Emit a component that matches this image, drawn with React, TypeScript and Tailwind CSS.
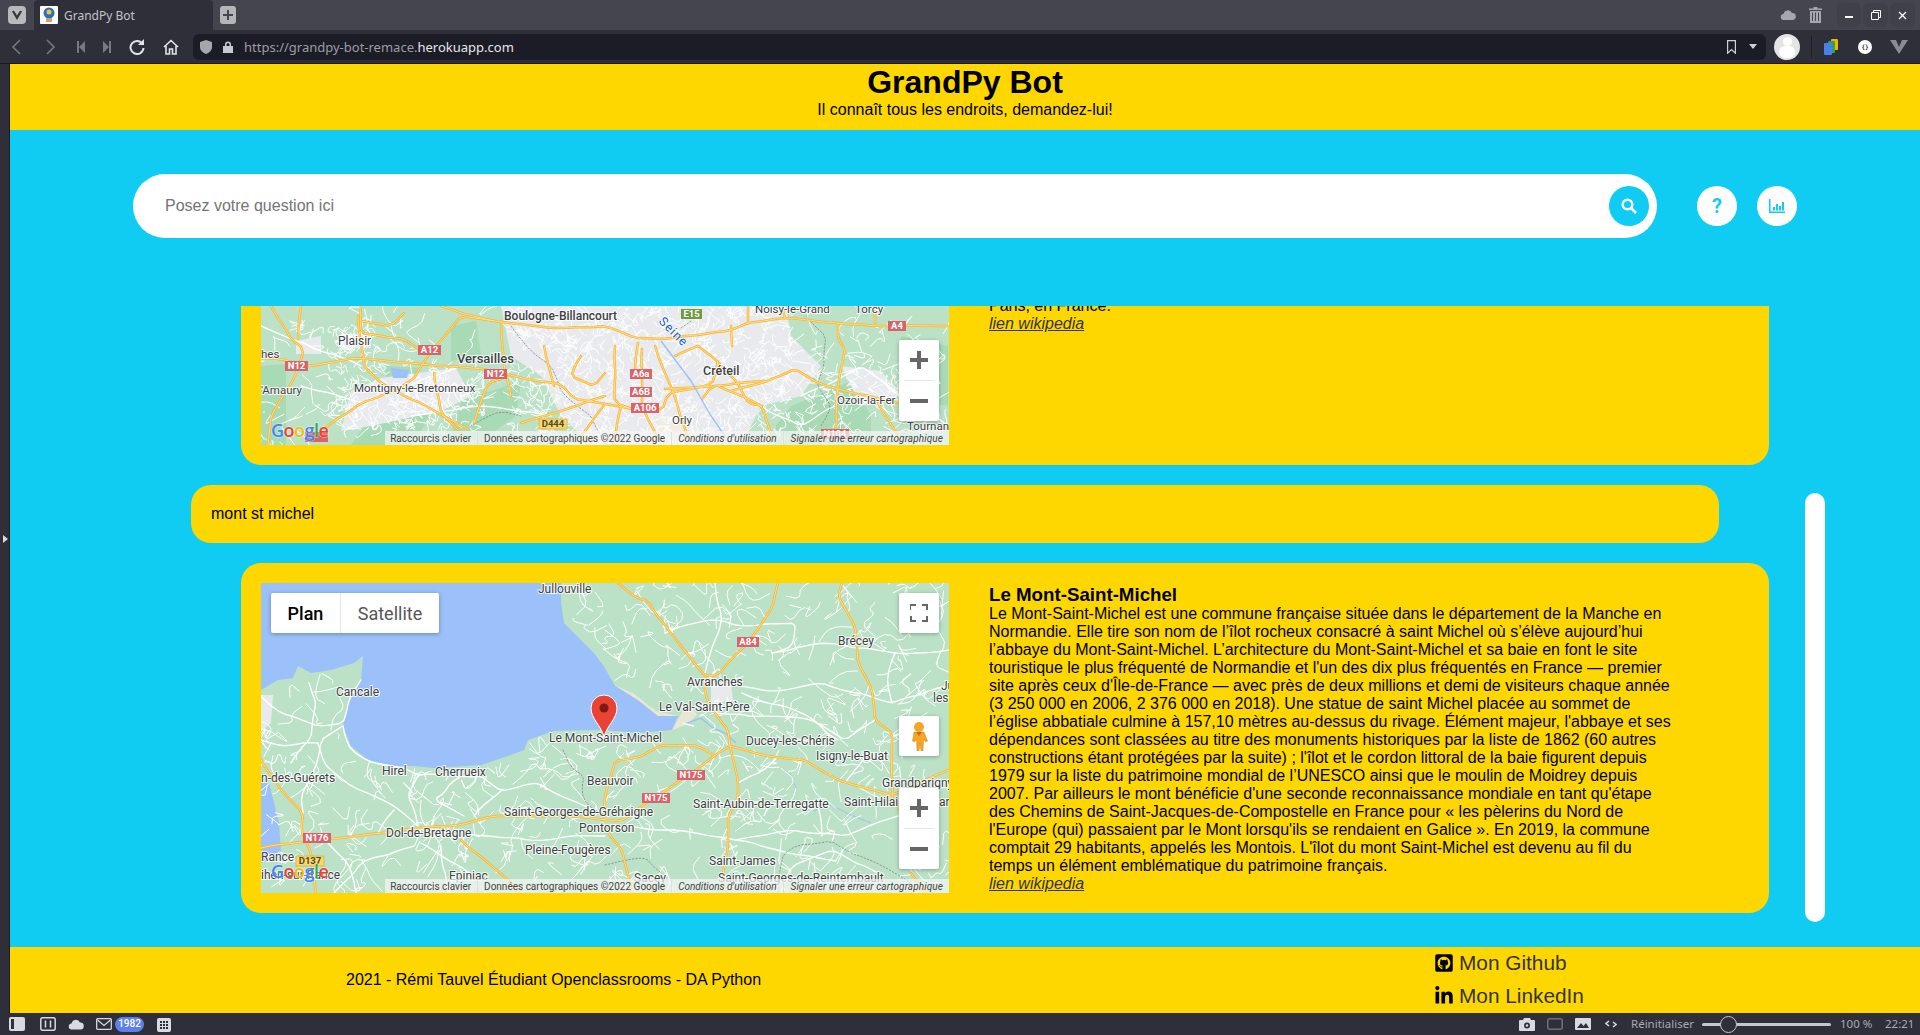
import React from "react";
import { FaGithubSquare, FaLinkedinIn } from "react-icons/fa";

type Pt = number[][];
const pts = (p: Pt) => p.map((q) => q.map((v) => Math.round(v * 10) / 10).join(",")).join(" ");

function rng(seed: number) {
  let s = seed;
  return () => {
    s = (s * 16807) % 2147483647;
    return s / 2147483647;
  };
}

function chaikin(p: Pt): Pt {
  if (p.length < 3) return p;
  const out: Pt = [p[0]];
  for (let i = 0; i < p.length - 1; i++) {
    const [a, b] = p[i];
    const [c, d] = p[i + 1];
    out.push([a * 0.75 + c * 0.25, b * 0.75 + d * 0.25]);
    out.push([a * 0.25 + c * 0.75, b * 0.25 + d * 0.75]);
  }
  out.push(p[p.length - 1]);
  return out;
}

function wiggle(p: Pt, amp: number, seed: number): Pt {
  const r = rng(seed + 7);
  const out: Pt = [p[0]];
  for (let i = 0; i < p.length - 1; i++) {
    const [a, b] = p[i];
    const [c, d] = p[i + 1];
    const dist = Math.hypot(c - a, d - b);
    const n = Math.max(1, Math.round(dist / 14));
    for (let k = 1; k <= n; k++) {
      const t = k / n;
      const j = k === n ? 0 : amp;
      out.push([a + (c - a) * t + (r() - 0.5) * j * 2, b + (d - b) * t + (r() - 0.5) * j * 2]);
    }
  }
  return chaikin(out);
}

function inPoly(x: number, y: number, poly: Pt) {
  let inside = false;
  for (let i = 0, j = poly.length - 1; i < poly.length; j = i++) {
    const [xi, yi] = poly[i];
    const [xj, yj] = poly[j];
    if (yi > y !== yj > y && x < ((xj - xi) * (y - yi)) / (yj - yi) + xi) inside = !inside;
  }
  return inside;
}

function streets(seed: number, n: number, x0: number, y0: number, x1: number, y1: number, len: number): Pt[] {
  const r = rng(seed);
  const out: Pt[] = [];
  for (let i = 0; i < n; i++) {
    let x = x0 + r() * (x1 - x0);
    let y = y0 + r() * (y1 - y0);
    const line: Pt = [[x, y]];
    const segs = 2 + Math.floor(r() * 3);
    for (let j = 0; j < segs; j++) {
      x += (r() - 0.5) * len;
      y += (r() - 0.5) * len;
      line.push([x, y]);
    }
    out.push(line);
  }
  return out;
}

function Roads({ yellow, white, thin, dashed }: { yellow: Pt[]; white: Pt[]; thin: Pt[]; dashed?: Pt[] }) {
  return (
    <g fill="none" strokeLinejoin="round" strokeLinecap="round">
      {thin.map((p, i) => (
        <polyline key={i} points={pts(chaikin(p))} stroke="#ffffff" strokeWidth={1} />
      ))}
      {white.map((p, i) => (
        <polyline key={i} points={pts(wiggle(p, 1.6, i + 3))} stroke="#ffffff" strokeWidth={1.4} />
      ))}
      {(dashed || []).map((p, i) => (
        <polyline key={i} points={pts(wiggle(p, 1.5, i + 40))} stroke="#80868b" strokeWidth={0.8} strokeDasharray="1.5 2" />
      ))}
      {yellow.map((p, i) => (
        <polyline key={i} points={pts(wiggle(p, 0.7, i + 90))} stroke="#f9b534" strokeWidth={2.5} />
      ))}
      {yellow.map((p, i) => (
        <polyline key={i} points={pts(wiggle(p, 0.7, i + 90))} stroke="#fde293" strokeWidth={0.9} />
      ))}
    </g>
  );
}

function Label({ x, y, t, s = 12, w = 400, c = "#3c4043" }: { x: number; y: number; t: string; s?: number; w?: number; c?: string }) {
  return (
    <text
      x={x}
      y={y + s * 0.36}
      fontFamily="Roboto, sans-serif"
      fontSize={s}
      fontWeight={w}
      fill={c}
      stroke="#ffffff"
      strokeOpacity={0.85}
      strokeWidth={2}
      paintOrder="stroke"
    >
      {t}
    </text>
  );
}

function Shield({ x, y, w, t, kind = "r" }: { x: number; y: number; w: number; t: string; kind?: "r" | "y" | "g" }) {
  const bg = kind === "r" ? "#d9636a" : kind === "y" ? "#fdd663" : "#6f9a3f";
  const fg = kind === "y" ? "#4a4a3a" : "#ffffff";
  return (
    <g>
      <rect x={x} y={y} width={w} height={10} fill={bg} stroke={kind === "y" ? "#d8a92c" : "none"} strokeWidth={0.7} />
      <text x={x + w / 2} y={y + 8.4} textAnchor="middle" fontFamily="Roboto, sans-serif" fontSize={9.5} fontWeight={700} fill={fg}>
        {t}
      </text>
    </g>
  );
}

function GoogleLogo({ x, y }: { x: number; y: number }) {
  return (
    <text x={x} y={y} fontFamily="'Open Sans', sans-serif" fontSize={18} fontWeight={600} stroke="#ffffff" strokeOpacity={0.45} strokeWidth={1.5} paintOrder="stroke" letterSpacing={-0.5}>
      <tspan fill="#4285f4">G</tspan>
      <tspan fill="#ea4335">o</tspan>
      <tspan fill="#fbbc05">o</tspan>
      <tspan fill="#4285f4">g</tspan>
      <tspan fill="#34a853">l</tspan>
      <tspan fill="#ea4335">e</tspan>
    </text>
  );
}

function ZoomControls() {
  return (
    <div className="absolute right-[10px] top-[205px] w-[40px] h-[81px] bg-white rounded-[2px] shadow-[0_1px_4px_rgba(0,0,0,0.3)] flex flex-col items-center">
      <div className="h-[40px] flex items-center justify-center">
        <svg width="18" height="18" viewBox="0 0 18 18"><path d="M0 7h7V0h4v7h7v4h-7v7H7v-7H0z" fill="#666666" /></svg>
      </div>
      <div className="w-[30px] h-px bg-[#e6e6e6]" />
      <div className="h-[40px] flex items-center justify-center">
        <svg width="18" height="18" viewBox="0 0 18 18"><path d="M0 7h18v4H0z" fill="#666666" /></svg>
      </div>
    </div>
  );
}

function Attribution() {
  return (
    <div className="absolute right-0 bottom-0 h-[14px] pt-px flex items-center bg-[rgba(245,245,245,0.72)] text-[10px] leading-[13px] text-[#444444] font-['Roboto',sans-serif] whitespace-nowrap">
      <span className="pl-[5px] pr-[6px] border-r border-[#e0e0e0]">Raccourcis clavier</span>
      <span className="pl-[6px] pr-[6px] border-r border-[#e0e0e0]">Données cartographiques ©2022 Google</span>
      <span className="pl-[6px] pr-[6px] border-r border-[#e0e0e0] italic">Conditions d'utilisation</span>
      <span className="pl-[7px] pr-[6px] italic tracking-[0.1px]">Signaler une erreur cartographique</span>
    </div>
  );
}

const map1Yellow: Pt[] = [
  [[0,52],[20,53],[47,60],[93,52],[150,57],[180,60],[223,63],[277,75],[300,78],[313,93],[344,98],[371,103],[401,105],[407,87],[451,78],[457,55]],
  [[153,72],[167,50],[200,10],[233,15]],
  [[180,0],[200,7],[233,15],[290,22],[344,20],[374,32],[401,33],[424,30],[467,25],[487,17],[524,12],[577,17],[627,20],[688,20]],
  [[63,123],[100,97],[137,83],[153,72]],
  [[283,40],[293,80]],
  [[213,117],[227,77],[240,73]],
  [[100,0],[100,27],[143,33],[157,43]],
  [[260,117],[293,107],[344,90]],
  [[377,37],[374,63]],
  [[394,40],[411,83],[427,133]],
  [[354,40],[354,97],[371,103]],
  [[381,43],[381,100],[397,133]],
  [[470,85],[501,77],[534,63],[557,77],[577,83],[637,97]],
  [[577,17],[577,33],[584,43],[577,80],[574,130]],
  [[457,80],[481,90],[501,100],[511,130]],
  [[617,97],[637,130]],
  [[521,0],[524,12]],
  [[487,0],[487,17]],
  [[614,0],[614,17]],
  [[10,0],[30,33],[43,43],[33,73],[10,110],[7,139]],
  [[40,0],[37,33]],
  [[97,10],[103,60],[120,77],[140,88],[160,97],[177,107],[207,123]],
  [[143,7],[130,20],[100,15]],
  [[173,67],[180,107],[200,127]],
  [[240,15],[243,60],[250,90]],
  [[320,50],[310,70],[333,80],[344,67]],
  [[437,40],[454,53],[477,77],[487,97],[501,100]],
  [[441,93],[451,80],[504,75]],
  [[437,40],[414,50]],
  [[404,83],[451,80]],
  [[344,98],[320,130]],
  [[360,100],[352,139]],
  [[470,20],[471,40]],
];
const map1White: Pt[] = [
  [[0,20],[30,33],[100,60]],
  [[40,80],[100,97],[200,60]],
  [[150,110],[220,100],[290,110]],
  [[540,90],[600,60],[640,90],[687,120]],
  [[500,100],[540,120],[574,100]],
];
const map1Thin: Pt[] = [
  ...streets(11, 620, 250, 0, 530, 139, 16),
  ...streets(23, 130, 80, 60, 215, 125, 16),
  ...streets(37, 40, 70, 20, 120, 50, 14),
  ...streets(53, 70, 0, 0, 240, 139, 30),
  ...streets(71, 100, 530, 20, 687, 139, 26),
  ...streets(83, 30, 575, 60, 640, 100, 14),
];
const map1Dash: Pt[] = [
  [[250,20],[270,45],[290,60],[300,85],[330,110],[340,130]],
  [[210,120],[240,105],[260,110]],
  [[545,10],[565,30],[563,60],[556,80],[570,100],[560,120]],
  [[430,15],[420,22]],
];

function Map1() {
  return (
    <div className="relative w-[688px] h-[310px] shrink-0 overflow-hidden">
      <svg width="688" height="310" viewBox="0 -171 688 310" className="block">
        <rect x="0" y="-171" width="688" height="310" fill="#bbe2c6" />
        {[
          [[190,20],[215,15],[220,50],[190,55]],
          [[125,60],[160,62],[150,75],[125,75]],
          [[200,95],[260,75],[255,110],[220,135],[190,130]],
          [[0,60],[25,58],[25,139],[0,139]],
          [[530,100],[590,75],[610,110],[610,139],[500,139]],
          [[640,30],[687,40],[687,100],[640,90]],
          [[432,5],[470,5],[470,20],[440,25]],
          [[120,95],[170,110],[150,139],[90,139]],
        ].map((p, i) => (
          <polygon key={i} points={pts(p)} fill="#a8dab5" />
        ))}
        {[
          [[240,0],[344,0],[525,0],[530,30],[560,60],[540,90],[500,100],[480,139],[330,139],[300,110],[280,70],[250,50]],
          [[90,85],[120,72],[195,62],[210,90],[180,105],[110,120],[80,125]],
          [[80,28],[110,28],[110,42],[80,42]],
          [[580,60],[620,65],[640,90],[600,100]],
          [[35,35],[60,30],[60,48],[35,48]],
        ].map((p, i) => (
          <polygon key={i} points={pts(p)} fill="#e8eaed" />
        ))}
        <polygon points="130,62 148,64 146,72 132,72" fill="#9cc0f9" />
        <polygon points="398,113 425,113 427,139 398,139" fill="#f1ede0" />
        <Roads yellow={map1Yellow} white={map1White} thin={map1Thin} dashed={map1Dash} />
        <polyline points="400,35 430,75 450,110 470,139" fill="none" stroke="#9cc0f9" strokeWidth={1.4} />
        <Label x={243} y={10} t="Boulogne-Billancourt" w={500} s={12} />
        <Label x={77} y={35} t="Plaisir" />
        <Label x={196} y={52} t="Versailles" s={13} w={500} />
        <Label x={0} y={48} t="hes" s={11.5} />
        <Label x={0} y={84} t="'Amaury" s={11.5} />
        <Label x={93} y={82} t="Montigny-le-Bretonneux" s={11.5} />
        <Label x={442} y={64} t="Créteil" s={12.5} w={500} />
        <Label x={411} y={114} t="Orly" s={11.5} />
        <Label x={576} y={94} t="Ozoir-la-Fer" s={11.5} />
        <Label x={646} y={120} t="Tournan" s={11.5} />
        <Label x={494} y={3} t="Noisy-le-Grand" s={11.5} />
        <Label x={594} y={3} t="Torcy" s={11.5} />
        <text x={397} y={16} transform="rotate(45 397 16)" fontFamily="Roboto, sans-serif" fontSize={12.5} fill="#1a5fc8" stroke="#ffffff" strokeOpacity={0.8} strokeWidth={1.5} paintOrder="stroke" letterSpacing={1}>Seine</text>
        <Shield x={24} y={55} w={23} t="N12" />
        <Shield x={157} y={39} w={23} t="A12" />
        <Shield x={223} y={63} w={23} t="N12" />
        <Shield x={278} y={113} w={28} t="D444" kind="y" />
        <Shield x={420} y={3} w={21} t="E15" kind="g" />
        <Shield x={627} y={15} w={18} t="A4" />
        <Shield x={369} y={63} w={22} t="A6a" />
        <Shield x={369} y={81} w={22} t="A6B" />
        <Shield x={370} y={97} w={28} t="A106" />
        <Shield x={560} y={123} w={28} t="N104" />
        <rect x={44} y={126} width={23} height={10} fill="#d9636a" />
        <GoogleLogo x={10} y={131} />
      </svg>
      <ZoomControls />
      <Attribution />
    </div>
  );
}

const map2Water: Pt = [[300,0],[300,20],[303,40],[320,57],[333,70],[344,85],[354,103],[377,117],[397,133],[417,133],[411,147],[377,150],[344,147],[333,147],[293,148],[267,157],[263,167],[247,173],[220,182],[173,185],[153,183],[133,183],[107,177],[90,163],[82,143],[87,120],[100,97],[102,73],[93,80],[70,87],[50,90],[37,83],[32,95],[17,97],[0,107],[0,0]];

const map2Yellow: Pt[] = [
  [[517,0],[512,23],[501,40],[484,63],[467,80],[457,92],[444,93],[394,30],[387,18],[376,15],[357,0]],
  [[444,93],[444,113],[454,130],[467,147],[469,163],[477,197],[477,217],[467,233],[467,263],[462,290],[462,310]],
  [[469,163],[444,180],[411,203],[381,223],[361,238],[344,237],[307,233],[273,233],[233,233],[200,242],[157,245],[123,250],[67,256],[13,262],[0,265]],
  [[469,163],[501,172],[544,177],[577,197],[631,212],[688,187]],
  [[581,0],[577,13],[594,43],[597,80],[611,107],[614,137],[631,150],[631,213]],
  [[344,237],[344,213],[354,178],[381,173],[401,162],[437,163],[454,173]],
  [[0,177],[20,207],[42,230],[40,247],[50,270],[55,310]],
  [[344,245],[361,267],[371,310]],
  [[200,257],[227,280],[250,300],[258,310]],
  [[631,213],[640,230]],
  [[650,290],[665,310]],
];
const map2White: Pt[] = [
  [[82,143],[90,167],[107,178],[133,183],[157,192]],
  [[0,113],[20,130],[57,143],[82,140],[88,117],[100,97]],
  [[57,160],[63,180],[90,203],[133,223],[157,243]],
  [[82,143],[60,157],[57,177],[40,213],[42,230]],
  [[0,157],[20,163],[57,160]],
  [[157,193],[147,213],[157,243]],
  [[157,192],[220,193],[240,208],[277,200],[310,217],[333,227]],
  [[200,193],[173,217],[203,233]],
  [[133,227],[117,250]],
  [[153,263],[100,280],[73,310]],
  [[240,208],[213,233]],
  [[203,250],[267,257],[333,253],[344,253]],
  [[180,263],[187,310]],
  [[160,260],[213,293]],
  [[67,260],[87,280],[95,310]],
  [[30,180],[50,155],[55,120],[48,100]],
  [[478,103],[517,108],[561,100],[631,120],[688,103]],
  [[454,130],[504,133],[551,137],[584,157],[614,137]],
  [[481,110],[547,133],[577,157]],
  [[511,70],[561,60],[594,65],[634,70],[688,67]],
  [[454,0],[461,33],[444,90]],
  [[404,50],[447,37],[491,43],[534,40],[531,63],[511,70]],
  [[634,70],[626,100],[631,120]],
  [[670,147],[631,153]],
  [[474,257],[531,247],[584,253],[637,233]],
  [[344,243],[411,247],[474,257],[517,267],[575,278]],
  [[477,217],[557,223],[561,253]],
  [[477,200],[511,180],[517,173]],
  [[584,200],[607,170]],
  [[617,290],[571,267],[531,283],[520,310]],
];
const map2Thin: Pt[] = streets(19, 620, 0, 0, 688, 310, 30).filter(
  (l) => !l.some(([x, y]) => inPoly(x, y, map2Water)),
);
const map2Dash: Pt[] = [
  [[302,167],[310,185],[323,193],[322,215],[330,225],[344,232]],
  [[344,282],[385,275],[400,290]],
  [[517,310],[523,270],[537,262],[570,258],[590,270],[625,285],[650,300]],
];

function Map2() {
  return (
    <div className="relative w-[688px] h-[310px] shrink-0 overflow-hidden">
      <svg width="688" height="310" viewBox="0 0 688 310" className="block">
        <rect width="688" height="310" fill="#bbe2c6" />
        <polygon points="0,200 8,200 18,240 20,270 0,280" fill="#9cc0f9" />
        <polygon points={pts(map2Water)} fill="#9cc0f9" />
        <polygon points="355,103 377,117 397,133 417,133 422,128 411,147 425,142 436,132 430,122 417,133 395,128 372,110" fill="#e9e6d3" />
        <polygon points="0,112 12,112 10,140 0,148" fill="#e8eaed" />
        <polygon points="450,100 470,100 472,118 450,120" fill="#e8eaed" />
        <polyline points="424,141 440,135 452,145 464,150 475,160" fill="none" stroke="#9cc0f9" strokeWidth={1.4} />
        <polyline points="552,228 570,222 590,232 610,240" fill="none" stroke="#9cc0f9" strokeWidth={1} />
        <polyline points="529,190 535,205" fill="none" stroke="#9cc0f9" strokeWidth={1} />
        <Roads yellow={map2Yellow} white={map2White} thin={map2Thin} dashed={map2Dash} />
        <Label x={277} y={6} t="Jullouville" />
        <Label x={75} y={109} t="Cancale" />
        <Label x={121} y={188} t="Hirel" />
        <Label x={174} y={189} t="Cherrueix" />
        <Label x={0} y={195} t="n-des-Guérets" />
        <Label x={288} y={155} t="Le Mont-Saint-Michel" />
        <Label x={243} y={229} t="Saint-Georges-de-Gréhaigne" />
        <Label x={125} y={250} t="Dol-de-Bretagne" />
        <Label x={318} y={245} t="Pontorson" />
        <Label x={264} y={267} t="Pleine-Fougères" />
        <Label x={326} y={198} t="Beauvoir" />
        <Label x={0} y={274} t="Rance" />
        <Label x={0} y={292} t="ihen-sur-Rance" />
        <Label x={188} y={293} t="Epiniac" />
        <Label x={426} y={99} t="Avranches" />
        <Label x={398} y={124} t="Le Val-Saint-Père" />
        <Label x={577} y={58} t="Brécey" />
        <Label x={485} y={158} t="Ducey-les-Chéris" />
        <Label x={555} y={173} t="Isigny-le-Buat" />
        <Label x={621} y={200} t="Grandparigny" />
        <Label x={432} y={221} t="Saint-Aubin-de-Terregatte" />
        <Label x={583} y={219} t="Saint-Hilai" />
        <Label x={678} y={219} t="ar" />
        <Label x={448} y={278} t="Saint-James" />
        <Label x={373} y={295} t="Sacey" />
        <Label x={457} y={295} t="Saint-Georges-de-Reintembault" />
        <Label x={680} y={103} t="Ju" />
        <Label x={672} y={115} t="les" />
        <Shield x={476} y={54} w={22} t="A84" />
        <Shield x={416} y={187} w={28} t="N175" />
        <Shield x={381} y={210} w={28} t="N175" />
        <Shield x={42} y={250} w={28} t="N176" />
        <Shield x={35} y={273} w={28} t="D137" kind="y" />
        <GoogleLogo x={10} y={295} />
        <path d="M343 154 C340 142 330 136 330 125 A13 13 0 0 1 356 125 C356 136 346 142 343 154 Z" fill="#ea4335" stroke="#ffffff" strokeWidth={1} />
        <circle cx="343" cy="125" r="4.500" fill="#7d1a12" />
      </svg>
      <div className="absolute left-[10px] top-[10px] w-[168px] h-[40px] flex bg-white rounded-[2px] shadow-[0_1px_4px_rgba(0,0,0,0.3)] font-['Roboto',sans-serif] text-[18px]">
        <div className="w-[70px] flex items-center justify-center font-medium text-black border-r border-[#e6e6e6]">Plan</div>
        <div className="flex-1 flex items-center justify-center text-[#565656]">Satellite</div>
      </div>
      <div className="absolute right-[10px] top-[10px] w-[40px] h-[40px] bg-white rounded-[2px] shadow-[0_1px_4px_rgba(0,0,0,0.3)] flex items-center justify-center">
        <svg width="18" height="18" viewBox="0 0 18 18" fill="none" stroke="#666666" strokeWidth="2"><path d="M0 6V1h6M12 1h5v5M17 12v5h-5M6 17H1v-5" /></svg>
      </div>
      <div className="absolute right-[10px] top-[133px] w-[40px] h-[40px] bg-white rounded-[2px] shadow-[0_1px_4px_rgba(0,0,0,0.3)] flex items-center justify-center">
        <svg width="18" height="30" viewBox="0 0 18 30">
          <circle cx="9" cy="6" r="5" fill="#f5a623" />
          <path d="M4 11h10l3.500 9-2 1-2-3-.5 12h-2l-1-8-1 8H7L6.500 18l-2 3-2-1z" fill="#f5a623" stroke="#c98a1a" strokeWidth="0.5" />
          <path d="M6 11h6l-3 4z" fill="#d9622b" />
        </svg>
      </div>
      <ZoomControls />
      <Attribution />
    </div>
  );
}

const body = [
  "Le Mont-Saint-Michel est une commune française située dans le département de la Manche en",
  "Normandie. Elle tire son nom de l’îlot rocheux consacré à saint Michel où s’élève aujourd’hui",
  "l’abbaye du Mont-Saint-Michel. L’architecture du Mont-Saint-Michel et sa baie en font le site",
  "touristique le plus fréquenté de Normandie et l'un des dix plus fréquentés en France — premier",
  "site après ceux d'Île-de-France — avec près de deux millions et demi de visiteurs chaque année",
  "(3 250 000 en 2006, 2 376 000 en 2018). Une statue de saint Michel placée au sommet de",
  "l’église abbatiale culmine à 157,10 mètres au-dessus du rivage. Élément majeur, l'abbaye et ses",
  "dépendances sont classées au titre des monuments historiques par la liste de 1862 (60 autres",
  "constructions étant protégées par la suite) ; l'îlot et le cordon littoral de la baie figurent depuis",
  "1979 sur la liste du patrimoine mondial de l’UNESCO ainsi que le moulin de Moidrey depuis",
  "2007. Par ailleurs le mont bénéficie d'une seconde reconnaissance mondiale en tant qu'étape",
  "des Chemins de Saint-Jacques-de-Compostelle en France pour « les pèlerins du Nord de",
  "l'Europe (qui) passaient par le Mont lorsqu'ils se rendaient en Galice ». En 2019, la commune",
  "comptait 29 habitants, appelés les Montois. L'îlot du mont Saint-Michel est devenu au fil du",
  "temps un élément emblématique du patrimoine français.",
];

function TopBar() {
  return (
    <div className="h-[30px] bg-[#44454f] flex items-center">
      <div className="ml-[8px] w-[18px] h-[18px] rounded-[4px] bg-[#b9b9bd] flex items-center justify-center">
        <svg width="12" height="11" viewBox="0 0 12 11"><path d="M1 1.500 6 10l5-8.500c-.5-1-2-1-2.500 0L6 5.500 3.500 1.500C3 .5 1.500.5 1 1.500z" fill="#35363f" /></svg>
      </div>
      <div className="ml-[8px] w-[179px] h-[30px] bg-[#2f2f39] rounded-t-[4px] flex items-center pl-[6px]">
        <div className="w-[18px] h-[18px] bg-white rounded-[1px] flex items-center justify-center">
          <svg width="14" height="16" viewBox="0 0 14 16">
            <circle cx="7" cy="6" r="5.500" fill="#2b6fc4" />
            <circle cx="7" cy="5" r="2.500" fill="#f2c230" />
            <rect x="4" y="11" width="6" height="4" fill="#c9a271" />
          </svg>
        </div>
        <span className="ml-[6px] mt-px text-[12px] text-[#c2c3c9] font-['Noto_Sans',sans-serif] leading-none">GrandPy Bot</span>
      </div>
      <div className="ml-[7px] w-[16px] h-[18px] rounded-[3px] bg-[#b5b5b9] flex items-center justify-center">
        <svg width="10" height="10" viewBox="0 0 10 10"><path d="M4 0h2v4h4v2H6v4H4V6H0V4h4z" fill="#44454f" /></svg>
      </div>
      <div className="ml-auto flex items-center">
        <svg width="16" height="10" viewBox="0 0 16 10"><path d="M4 10a3 3 0 0 1-.5-6A4.500 4.500 0 0 1 12 3a3.500 3.500 0 0 1 .5 7z" fill="#a6a7ad" /></svg>
        <svg className="ml-[13px]" width="13" height="16" viewBox="0 0 13 16" fill="#a6a7ad"><path d="M4.500 0h4v1.500H13V3H0V1.500h4.500zM1 4h11v12H1zm2 1.500V14h1V5.500zm3 0V14h1V5.500zm3 0V14h1V5.500z" /></svg>
        <div className="ml-[15px] w-[24px] h-[24px] rounded-[6px] bg-[#3f4049] flex items-center justify-center">
          <div className="w-[8px] h-[2px] mt-[4px] bg-white" />
        </div>
        <div className="ml-[2px] w-[25px] h-[24px] rounded-[6px] bg-[#3f4049] flex items-center justify-center">
          <svg width="10" height="10" viewBox="0 0 10 10" fill="none" stroke="#ffffff"><path d="M2.500 2.500V.5h7v7h-2M.5 2.500h7v7h-7z" /></svg>
        </div>
        <div className="ml-[2px] mr-[5px] w-[25px] h-[24px] rounded-[6px] bg-[#3f4049] flex items-center justify-center">
          <svg width="9" height="9" viewBox="0 0 9 9" stroke="#ffffff" strokeWidth="1.300"><path d="M1 1l7 7M8 1L1 8" /></svg>
        </div>
      </div>
    </div>
  );
}

function AddressBar() {
  return (
    <div className="h-[34px] bg-[#2f2f39] border-b border-[#17171c] flex items-center">
      <svg className="ml-[11px]" width="10" height="16" viewBox="0 0 10 16" fill="none" stroke="#777880" strokeWidth="1.600"><path d="M9 1 2 8l7 7" /></svg>
      <svg className="ml-[25px]" width="10" height="16" viewBox="0 0 10 16" fill="none" stroke="#777880" strokeWidth="1.600"><path d="M1 1l7 7-7 7" /></svg>
      <svg className="ml-[21px]" width="8" height="12" viewBox="0 0 8 12" fill="#777880"><path d="M0 0h2v12H0zM8 0v12L2 6z" /></svg>
      <svg className="ml-[18px]" width="8" height="12" viewBox="0 0 8 12" fill="#777880"><path d="M6 0h2v12H6zM0 0v12l6-6z" /></svg>
      <svg className="ml-[18px]" width="16" height="16" viewBox="0 0 16 16" fill="none" stroke="#e3e3e6" strokeWidth="2"><path d="M13.500 5A6.500 6.500 0 1 0 14.500 9" /><path d="M15 0v6H9z" fill="#e3e3e6" stroke="none" /></svg>
      <svg className="ml-[18px]" width="16" height="16" viewBox="0 0 16 16" fill="none" stroke="#e3e3e6" strokeWidth="1.600"><path d="M1 8 8 1.500 15 8M3 7v8h3.500v-5h3v5H13V7" /></svg>
      <div className="ml-[14px] flex-1 h-[26px] mr-[154px] bg-[#1c1c26] rounded-[6px] flex items-center">
        <svg className="ml-[7px]" width="12" height="14" viewBox="0 0 12 14"><path d="M6 0l6 2v5c0 3.500-3 6-6 7-3-1-6-3.500-6-7V2z" fill="#a6a7ad" /></svg>
        <svg className="ml-[11px]" width="10" height="12" viewBox="0 0 10 12"><path d="M2 5V3.500a3 3 0 0 1 6 0V5h2v7H0V5zm1.500 0h3V3.500a1.500 1.500 0 0 0-3 0z" fill="#c9cacf" /></svg>
        <span className="ml-[11px] mt-px text-[13px] leading-none font-['Noto_Sans',sans-serif] text-[#9c9da5]">
          https://grandpy-bot-remace.<span className="text-[#e6e6e9]">herokuapp.com</span>
        </span>
        <svg className="ml-auto" width="9" height="14" viewBox="0 0 9 14" fill="none" stroke="#d0d0d4" strokeWidth="1.200"><path d="M.6.6h7.800v12.600L4.500 9.500.6 13.200z" /></svg>
        <svg className="ml-[13px] mr-[9px]" width="8" height="5" viewBox="0 0 8 5"><path d="M0 0h8L4 5z" fill="#d0d0d4" /></svg>
      </div>
      <div className="absolute left-[1774px] top-[34px] w-[26px] h-[26px] rounded-full bg-[#e4e4e4] flex flex-col items-center justify-center overflow-hidden">
        <div className="w-[9px] h-[9px] rounded-full bg-white" />
        <div className="w-[16px] h-[12px] rounded-full bg-white" />
      </div>
      <div className="absolute left-[1811px] top-[36px] w-px h-[22px] bg-[#1f1f27]" />
      <svg className="absolute left-[1824px] top-[39px]" width="15" height="16" viewBox="0 0 15 16">
        <rect x="7" y="0" width="7" height="11" rx="1" fill="#f2b400" />
        <rect x="4" y="2" width="7" height="12" rx="1" fill="#2ca25f" />
        <rect x="0" y="4" width="8" height="12" rx="1" fill="#4a80e8" />
      </svg>
      <div className="absolute left-[1858px] top-[40px] w-[14px] h-[14px] rounded-full bg-white text-[6px] leading-[14px] text-center font-bold text-[#333333] font-['DejaVu_Sans_Mono',monospace]">{"{}"}</div>
      <svg className="absolute left-[1890px] top-[40px]" width="18" height="14" viewBox="0 0 18 14"><path d="M0 0h6l3 7 3-7h6L9 14z" fill="#8b8c92" /></svg>
    </div>
  );
}

function StatusBar() {
  return (
    <div className="h-[22px] bg-[#2f2f39] flex items-center text-[11.5px] text-[#a9abb3] font-['Noto_Sans',sans-serif] leading-none">
      <svg className="ml-[9px]" width="16" height="14" viewBox="0 0 16 14"><rect width="16" height="14" rx="2" fill="#d8dae0" /><rect x="2" y="2" width="3" height="10" fill="#2f2f39" /></svg>
      <svg className="ml-[15px]" width="16" height="14" viewBox="0 0 16 14" fill="none" stroke="#d8dae0" strokeWidth="1.500"><rect x=".8" y=".8" width="14.400" height="12.400" rx="2" /><path d="M5.500 3.500v7M10.500 3.500v7" /></svg>
      <svg className="ml-[12px]" width="16" height="11" viewBox="0 0 16 10"><path d="M4 10a3 3 0 0 1-.5-6A4.500 4.500 0 0 1 12 3a3.500 3.500 0 0 1 .5 7z" fill="#d8dae0" /></svg>
      <svg className="ml-[12px]" width="16" height="12" viewBox="0 0 16 12" fill="none" stroke="#d8dae0" strokeWidth="1.300"><rect x=".7" y=".7" width="14.600" height="10.600" rx="1" /><path d="M1.500 2 8 7.500 14.500 2" /></svg>
      <div className="ml-[3px] w-[29px] h-[15px] rounded-full bg-[#5f7fec] text-white text-[10px] font-['Roboto',sans-serif] font-medium flex items-center justify-center">1982</div>
      <svg className="ml-[13px]" width="14" height="16" viewBox="0 0 14 16"><rect y="2" width="14" height="14" rx="2" fill="#d8dae0" /><path d="M3 5h2v2H3zm3 0h2v2H6zm3 0h2v2H9zM3 8h2v2H3zm3 0h2v2H6zm3 0h2v2H9zM3 11h2v2H3zm3 0h2v2H6zm3 0h2v2H9z" fill="#2f2f39" /></svg>
      <div className="ml-auto flex items-center">
        <svg width="16" height="13" viewBox="0 0 16 13"><path d="M5 0h6l1 2h3a1 1 0 0 1 1 1v9a1 1 0 0 1-1 1H1a1 1 0 0 1-1-1V3a1 1 0 0 1 1-1h3z" fill="#d8dae0" /><circle cx="8" cy="7.500" r="3" fill="#2f2f39" /><circle cx="8" cy="7.500" r="1.200" fill="#d8dae0" /></svg>
        <svg className="ml-[12px]" width="16" height="12" viewBox="0 0 16 12" fill="none" stroke="#6d6e77" strokeWidth="1.500"><rect x=".8" y=".8" width="14.400" height="10.400" rx="2" /></svg>
        <svg className="ml-[12px]" width="16" height="12" viewBox="0 0 16 12"><rect width="16" height="12" rx="1" fill="#d8dae0" /><path d="M2 10l4-5 2.500 3L11 5l3 5z" fill="#2f2f39" /></svg>
        <svg className="ml-[14px]" width="12" height="8" viewBox="0 0 12 8" fill="none" stroke="#d8dae0" strokeWidth="1.500"><path d="M4 1 1 3.500 4 6M8 2l3 2.500L8 7" /></svg>
        <span className="ml-[14px] w-[62px] whitespace-nowrap">Réinitialiser</span>
        <div className="ml-[9px] relative w-[129px] h-[3px] rounded-full bg-[#c5c7cf]">
          <div className="absolute left-[18px] top-[-7px] w-[17px] h-[17px] rounded-full bg-[#2f2f39] border border-[#c5c7cf]" />
        </div>
        <span className="ml-[9px] w-[31px] whitespace-nowrap">100 %</span>
        <span className="ml-[14px] mr-[7px] w-[28px] whitespace-nowrap">22:21</span>
      </div>
    </div>
  );
}

export default function App() {
  return (
    <div className="relative w-[1920px] h-[1035px] overflow-hidden bg-[#2f2f39] font-['Liberation_Sans',sans-serif] text-black">
      <TopBar />
      <AddressBar />
      <div className="flex h-[949px]">
        <div className="w-[10px] shrink-0 flex items-center border-r border-[#17171c]">
          <svg className="ml-[3px]" width="5" height="8" viewBox="0 0 5 8"><path d="M0 0l5 4-5 4z" fill="#d8dae0" /></svg>
        </div>
        <div className="flex-1 flex flex-col min-w-0">
          <header className="h-[66px] bg-[#ffd700] flex flex-col items-center shrink-0">
            <h1 className="text-[32px] leading-[37px] font-bold">GrandPy Bot</h1>
            <p className="text-[16px] leading-[18px]">Il connaît tous les endroits, demandez-lui!</p>
          </header>
          <main className="flex-1 bg-[#11ccf2] flex flex-col min-h-0">
            <div className="h-[176px] shrink-0 flex items-start pt-[44px] pl-[123px]">
              <div className="w-[1524px] h-[64px] bg-white rounded-full flex items-center pl-[32px] pr-[8px]">
                <span className="flex-1 text-[16px] text-[#757575]">Posez votre question ici</span>
                <div className="w-[40px] h-[40px] rounded-full bg-[#11ccf2] flex items-center justify-center">
                  <svg width="16" height="16" viewBox="0 0 16 16" fill="none" stroke="#ffffff" strokeWidth="2.500"><circle cx="6.500" cy="6.500" r="4.800" /><path d="M10 10l5 5" /></svg>
                </div>
              </div>
              <div className="ml-[40px] mt-[12px] w-[40px] h-[40px] rounded-full bg-white flex items-center justify-center">
                <span className="text-[20px] leading-none font-bold text-[#11ccf2] font-['Roboto',sans-serif]">?</span>
              </div>
              <div className="ml-[20px] mt-[12px] w-[40px] h-[40px] rounded-full bg-white flex items-center justify-center">
                <svg width="16" height="14" viewBox="0 0 16 14" fill="#11ccf2"><path d="M0 0h1.500v12.500H16V14H0z" /><path d="M4 8h2v3.500H4zM7 5h2v6.500H7zM10 7h2v4.500h-2zM13 3h2v8.500h-2z" /></svg>
              </div>
            </div>
            <div className="relative flex-1 min-h-0">
              <div className="h-[624px] overflow-hidden">
                <div className="mt-[-191px] flex flex-col gap-[20px]">
                  <section className="ml-[231px] w-[1528px] bg-[#ffd700] rounded-[20px] p-[20px] flex">
                    <Map1 />
                    <div className="ml-[40px] pt-[162px] text-[16px] leading-[18px]">
                      <p>Paris, en France.</p>
                      <a className="italic underline text-[#333333]">lien wikipedia</a>
                    </div>
                  </section>
                  <div className="ml-[181px] w-[1528px] h-[58px] bg-[#ffd700] rounded-[20px] flex items-center pl-[20px] text-[16px]">mont st michel</div>
                  <section className="ml-[231px] w-[1528px] bg-[#ffd700] rounded-[20px] p-[20px] flex">
                    <Map2 />
                    <div className="ml-[40px] pt-px text-[16px] leading-[18px] whitespace-nowrap">
                      <h2 className="text-[18.72px] leading-[21px] font-bold">Le Mont-Saint-Michel</h2>
                      {body.map((l, i) => (
                        <div key={i}>{l}</div>
                      ))}
                      <a className="italic underline text-[#333333]">lien wikipedia</a>
                    </div>
                  </section>
                </div>
              </div>
              <div className="absolute left-[1795px] top-[187px] w-[20px] h-[429px] bg-white rounded-[10px]" />
            </div>
          </main>
          <footer className="h-[66px] shrink-0 bg-[#ffd700] flex items-center">
            <span className="ml-[336px] w-[1088px] text-[16px] whitespace-nowrap">2021 - Rémi Tauvel Étudiant Openclassrooms - DA Python</span>
            <div className="mt-[-2px] flex flex-col gap-[9px] text-[20.8px] leading-[24px] text-[#333333]">
              <div className="flex items-center">
                <FaGithubSquare className="text-black w-[20px] h-[20px]" />
                <span className="ml-[5px]">Mon Github</span>
              </div>
              <div className="flex items-center">
                <FaLinkedinIn className="text-black w-[20px] h-[20px]" />
                <span className="ml-[5px]">Mon LinkedIn</span>
              </div>
            </div>
          </footer>
        </div>
      </div>
      <StatusBar />
    </div>
  );
}
